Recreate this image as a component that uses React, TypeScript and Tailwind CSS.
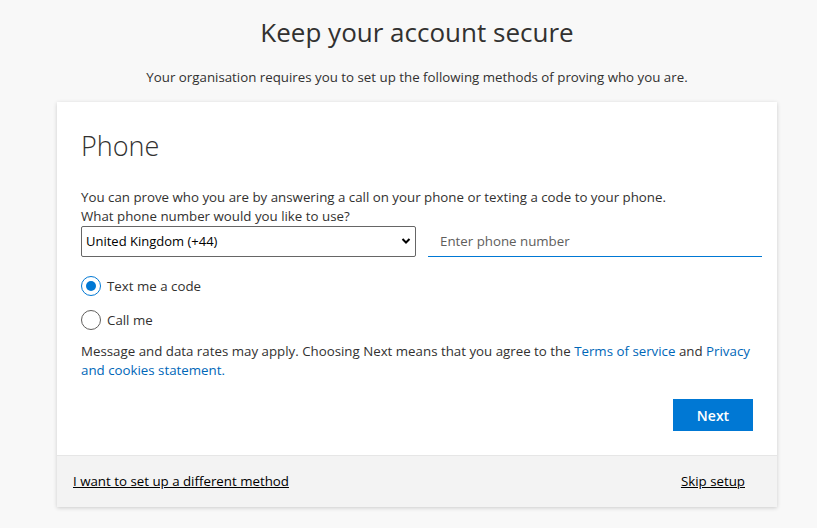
import React, { useState } from 'react';

const font = { fontFamily: '"Segoe UI", "Open Sans", "Noto Sans", sans-serif' };

export default function App() {
  const [method, setMethod] = useState<'text' | 'call'>('text');

  return (
    <div
      className="min-h-[528px] w-full bg-[#f8f8f8] text-[#323130] flex flex-col items-center pt-[12px] pl-[17px]"
      style={font}
    >
      <h1 className="text-[26px] leading-[40px] text-[#323130]">Keep your account secure</h1>
      <p className="mt-[16px] text-[13.3px] leading-[18px] text-[#323130]">
        Your organisation requires you to set up the following methods of proving who you are.
      </p>

      <div className="mt-[16px] w-[720px] bg-white shadow-[0_1px_4px_rgba(0,0,0,0.18)]">
        <div className="px-[24px] pt-[26px] pb-[24px]">
          <h2 className="text-[27px] font-light leading-[36px] text-[#323130]">Phone</h2>

          <p className="mt-[24px] text-[13.3px] leading-[19px]">
            You can prove who you are by answering a call on your phone or texting a code to your phone.
          </p>
          <p className="text-[13.3px] leading-[19px]">What phone number would you like to use?</p>

          <div className="mr-[-10px] flex gap-[12px]">
            <div className="relative w-[335px] shrink-0">
              <select
                className="h-[31px] w-full appearance-none border border-[#666] rounded-[2px] bg-white pl-[4px] pr-[24px] text-[13px] text-black outline-none"
                defaultValue="uk"
              >
                <option value="uk">United Kingdom (+44)</option>
              </select>
              <svg
                className="pointer-events-none absolute right-[5px] top-[11px]"
                width="10"
                height="8"
                viewBox="0 0 10 8"
              >
                <path d="M1.5 2 L5 5.5 L8.5 2" stroke="#000" strokeWidth="2" fill="none" />
              </svg>
            </div>
            <input
              placeholder="Enter phone number"
              className="h-[31px] w-[334px] shrink-0 border-b border-[#0078d4] px-[12px] text-[13.3px] outline-none placeholder:text-[#605e5c]"
            />
          </div>

          <div className="mt-[19px] flex flex-col gap-[14px]">
            <label className="flex items-center gap-[6px] cursor-pointer" onClick={() => setMethod('text')}>
              <span
                className={
                  method === 'text'
                    ? 'flex h-[20px] w-[20px] items-center justify-center rounded-full border border-[#0078d4]'
                    : 'flex h-[20px] w-[20px] items-center justify-center rounded-full border border-[#605e5c]'
                }
              >
                {method === 'text' && <span className="h-[10px] w-[10px] rounded-full bg-[#0078d4]" />}
              </span>
              <span className="text-[13.3px] leading-[20px]">Text me a code</span>
            </label>
            <label className="flex items-center gap-[6px] cursor-pointer" onClick={() => setMethod('call')}>
              <span
                className={
                  method === 'call'
                    ? 'flex h-[20px] w-[20px] items-center justify-center rounded-full border border-[#0078d4]'
                    : 'flex h-[20px] w-[20px] items-center justify-center rounded-full border border-[#605e5c]'
                }
              >
                {method === 'call' && <span className="h-[10px] w-[10px] rounded-full bg-[#0078d4]" />}
              </span>
              <span className="text-[13.3px] leading-[20px]">Call me</span>
            </label>
          </div>

          <p className="mt-[12px] text-[13.3px] leading-[19px]">
            Message and data rates may apply. Choosing Next means that you agree to the{' '}
            <a className="text-[#0067b8]" href="#">Terms of service</a> and{' '}
            <a className="text-[#0067b8]" href="#">Privacy and cookies statement.</a>
          </p>

          <div className="mt-[19px] flex justify-end">
            <button className="h-[32px] w-[80px] bg-[#0078d4] text-[14px] font-semibold text-white">
              Next
            </button>
          </div>
        </div>

        <div className="flex h-[52px] items-center justify-between border-t border-[#e6e6e6] bg-[#f3f3f3] px-[16px]">
          <a href="#" className="text-[13.3px] text-black underline">I want to set up a different method</a>
          <a href="#" className="mr-[16px] text-[13.3px] text-black underline">Skip setup</a>
        </div>
      </div>
    </div>
  );
}
